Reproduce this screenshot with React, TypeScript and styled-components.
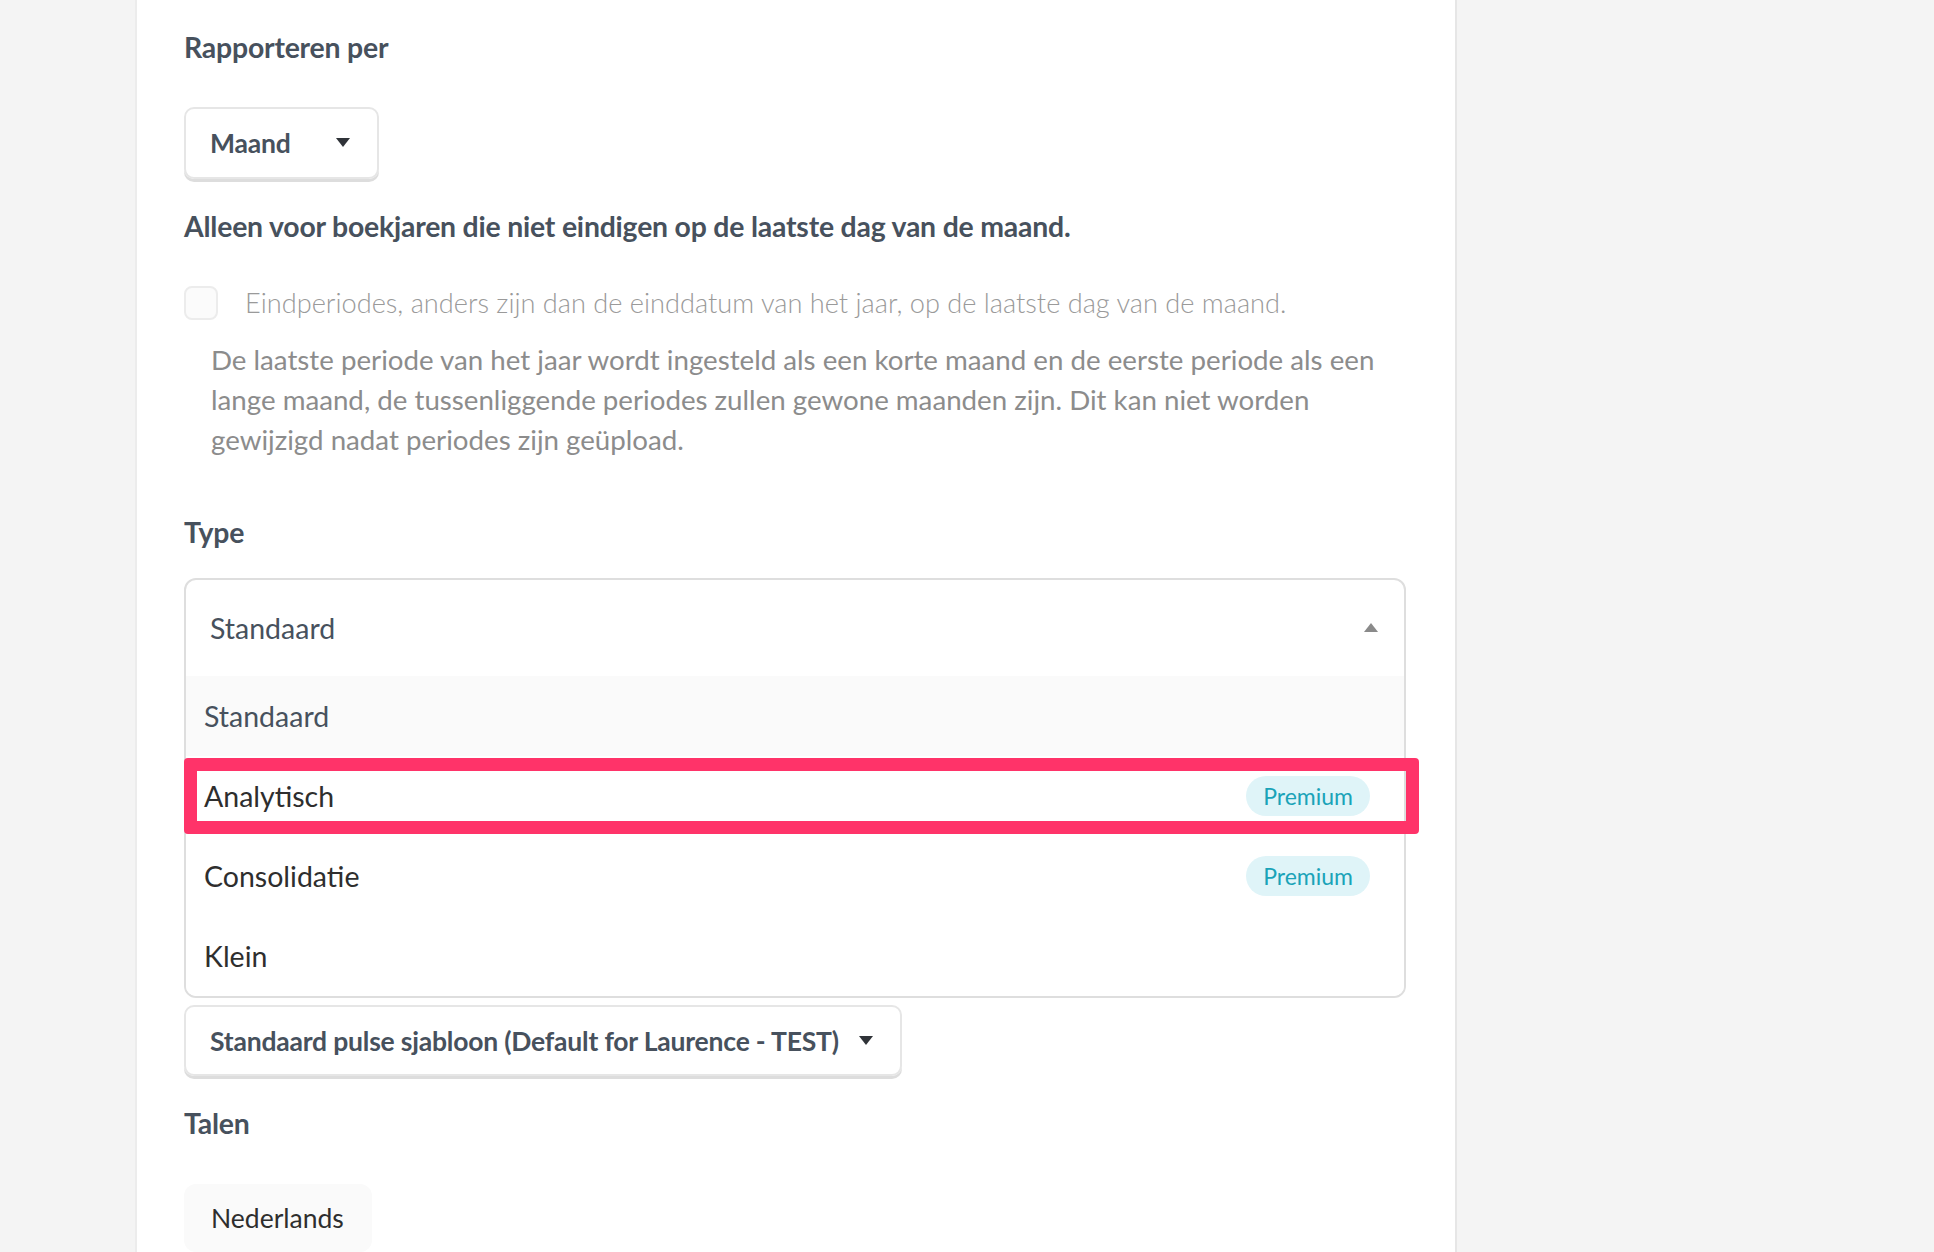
import React from 'react';
import styled, { createGlobalStyle } from 'styled-components';

const GlobalStyle = createGlobalStyle`
  html, body {
    margin: 0;
    padding: 0;
    background: #f4f4f4;
    font-family: "Lato", "Open Sans", sans-serif;
  }
`;

type Option = { label: string; premium?: boolean; selected?: boolean; highlighted?: boolean };

const options: Option[] = [
  { label: 'Standaard', selected: true },
  { label: 'Analytisch', premium: true, highlighted: true },
  { label: 'Consolidatie', premium: true },
  { label: 'Klein' },
];

const Caret = ({ up, color }: { up?: boolean; color: string }) => (
  <svg width="14" height="9" viewBox="0 0 14 9">
    <path d={up ? 'M0 9 L7 0 L14 9 Z' : 'M0 0 L14 0 L7 9 Z'} fill={color} />
  </svg>
);

const App: React.FC = () => {
  return (
    <>
      <GlobalStyle />
      <Page>
        <Panel>
          <Label>Rapporteren per</Label>
          <SmallSelect $top={44}>
            <span>Maand</span>
            <Caret color="#2f3338" />
          </SmallSelect>
          <Label $top={31}>Alleen voor boekjaren die niet eindigen op de laatste dag van de maand.</Label>
          <CheckRow>
            <Checkbox />
            <CheckText>Eindperiodes, anders zijn dan de einddatum van het jaar, op de laatste dag van de maand.</CheckText>
          </CheckRow>
          <Help>
            De laatste periode van het jaar wordt ingesteld als een korte maand en de eerste periode als een
            lange maand, de tussenliggende periodes zullen gewone maanden zijn. Dit kan niet worden
            gewijzigd nadat periodes zijn geüpload.
          </Help>
          <Label $top={56}>Type</Label>
          <TypeSelect>
            <TypeHeader>
              <span>Standaard</span>
              <Caret up color="#8a8a8a" />
            </TypeHeader>
            {options.map((o) => (
              <MenuItem key={o.label} $selected={!!o.selected}>
                <span>{o.label}</span>
                {o.premium && <Badge>Premium</Badge>}
                {o.highlighted && <Highlight />}
              </MenuItem>
            ))}
          </TypeSelect>
          <SmallSelect $top={7}>
            <span>Standaard pulse sjabloon (Default for Laurence - TEST)</span>
            <Caret color="#2f3338" />
          </SmallSelect>
          <Label $top={31}>Talen</Label>
          <Chip>Nederlands</Chip>
        </Panel>
      </Page>
    </>
  );
};

export default App;

const Page = styled.div`
  height: 1252px;
  overflow: hidden;
  background: #f4f4f4;
  padding-left: 135px;
`;

const Panel = styled.div`
  width: 1322px;
  height: 100%;
  box-sizing: border-box;
  background: #ffffff;
  border-left: 2px solid #ececec;
  border-right: 2px solid #e6e6e6;
  padding: 31px 0 0 47px;
  display: flex;
  flex-direction: column;
  align-items: flex-start;
`;

const Label = styled.div<{ $top?: number }>`
  margin-top: ${({ $top }) => $top ?? 0}px;
  font-size: 28.4px;
  line-height: 32px;
  font-weight: 700;
  color: #47515d;
  letter-spacing: -0.2px;
`;

const SmallSelect = styled.div<{ $top: number }>`
  margin-top: ${({ $top }) => $top}px;
  height: 72px;
  min-width: 195px;
  box-sizing: border-box;
  display: flex;
  align-items: center;
  justify-content: space-between;
  gap: 20px;
  padding: 0 27px 0 24px;
  border: 2px solid #e6e6e6;
  border-radius: 10px;
  box-shadow: 0 3px 0 #dddddd;
  font-size: 26.5px;
  font-weight: 700;
  color: #47515d;
  letter-spacing: -0.2px;
`;

const CheckRow = styled.div`
  margin-top: 44px;
  display: flex;
  align-items: center;
  gap: 27px;
`;

const Checkbox = styled.div`
  width: 34px;
  height: 34px;
  box-sizing: border-box;
  border: 2px solid #ececec;
  border-radius: 8px;
  background: #fbfbfb;
`;

const CheckText = styled.span`
  font-size: 27.2px;
  font-weight: 300;
  color: #9a9a9a;
`;

const Help = styled.p`
  margin: 20px 0 0 27px;
  width: 1190px;
  font-size: 27.7px;
  line-height: 40px;
  color: #8c8c8c;
`;

const TypeSelect = styled.div`
  margin-top: 30px;
  width: 1222px;
  box-sizing: border-box;
  border: 2px solid #dedede;
  border-radius: 12px;
`;

const TypeHeader = styled.div`
  height: 96px;
  display: flex;
  align-items: center;
  justify-content: space-between;
  padding: 0 26px 0 24px;
  font-size: 28.5px;
  color: #47515d;
`;

const MenuItem = styled.div<{ $selected: boolean }>`
  position: relative;
  height: 80px;
  display: flex;
  align-items: center;
  justify-content: space-between;
  padding: 0 34px 0 18px;
  background: ${({ $selected }) => ($selected ? '#fafafa' : '#ffffff')};
  font-size: 28.5px;
  color: ${({ $selected }) => ($selected ? '#47515d' : '#2e2e2e')};

  &:last-child {
    border-radius: 0 0 10px 10px;
  }
`;

const Badge = styled.span`
  height: 40px;
  line-height: 40px;
  padding: 0 17px;
  border-radius: 20px;
  background: #dff4f8;
  color: #1aa3b8;
  font-size: 23px;
`;

const Highlight = styled.div`
  position: absolute;
  top: 2px;
  bottom: 2px;
  left: -2px;
  right: -15px;
  border: 13px solid #ff3369;
  border-radius: 4px;
  pointer-events: none;
`;

const Chip = styled.div`
  margin-top: 45px;
  height: 68px;
  display: flex;
  align-items: center;
  padding: 0 28px 0 27px;
  border-radius: 12px;
  background: #fafafa;
  font-size: 26.5px;
  color: #2e2e2e;
`;
